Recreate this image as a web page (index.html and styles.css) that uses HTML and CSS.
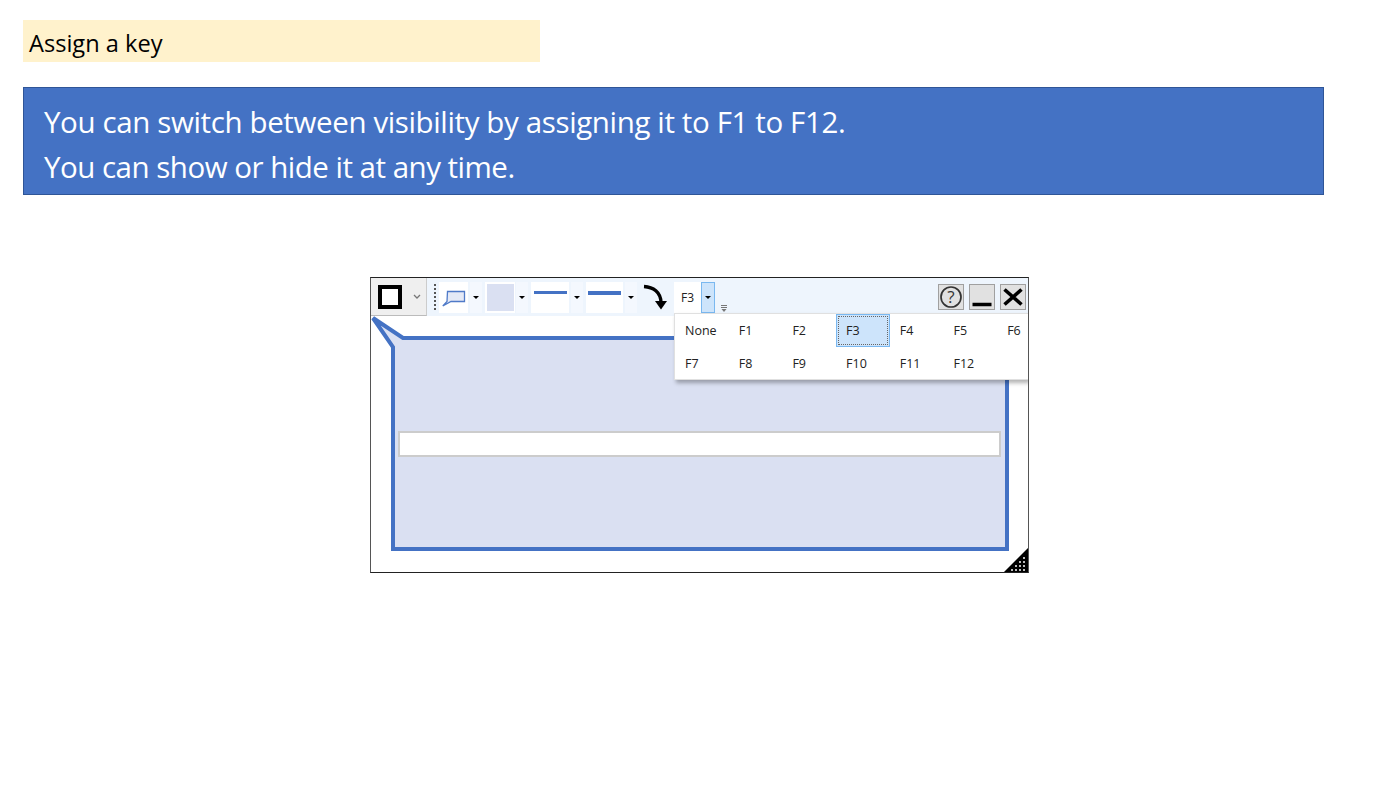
FILE: index.html
```html
<!DOCTYPE html>
<html lang="en">
<head>
  <meta charset="UTF-8" />
  <title>Assign a key</title>
  <link rel="stylesheet" href="styles.css">
</head>
<body>
  <div class="title">Assign a key</div>

  <div class="banner">
    <p>You can switch between visibility by assigning it to F1 to F12.</p>
    <p>You can show or hide it at any time.</p>
  </div>

  <div class="window">
    <div class="toolbar">
      <div class="shape-btn">
        <span class="shape-square"></span>
        <svg class="chevron" width="8" height="6" viewBox="0 0 8 6"><path d="M1 1l3 3 3-3" fill="none" stroke="#777" stroke-width="1.3"/></svg>
      </div>
      <div class="gripper"></div>

      <div class="tool tool-balloon">
        <svg width="24" height="20" viewBox="0 0 24 20"><path d="M5.5 4.5h17v10H9L.8 19 5 14.5z" fill="#e4e9f6" stroke="#4f7ac8" stroke-width="1.3"/></svg>
      </div>
      <div class="drop"><i class="caret"></i></div>

      <div class="tool tool-fill"><span class="swatch"></span></div>
      <div class="drop drop-fill"><i class="caret"></i></div>

      <div class="tool tool-line"><span class="line-thin"></span></div>
      <div class="drop"><i class="caret"></i></div>

      <div class="tool tool-line tool-line2"><span class="line-thick"></span></div>
      <div class="drop"><i class="caret"></i></div>

      <svg class="turn-arrow" width="26" height="30" viewBox="0 0 26 30"><path d="M1 4.5C10 5 18 10 18 21" fill="none" stroke="#000" stroke-width="3.4"/><path d="M12 19h12l-6 8.5z" fill="#000"/></svg>

      <div class="key-box">F3</div>
      <div class="key-drop"><i class="caret"></i></div>
      <svg class="overflow" width="8" height="8" viewBox="0 0 8 8"><path d="M1 1.5h6M1 3.5h6" stroke="#777" stroke-width="1"/><path d="M1.5 5h5L4 8z" fill="#777"/></svg>

      <div class="win-btns">
        <div class="win-btn">
          <svg width="24" height="24" viewBox="0 0 24 24"><circle cx="12" cy="12" r="10" fill="none" stroke="#333" stroke-width="1.7"/><text x="12" y="18" class="help-mark">?</text></svg>
        </div>
        <div class="win-btn">
          <svg width="24" height="24" viewBox="0 0 24 24"><path d="M2.5 19.5h19" stroke="#000" stroke-width="3.5"/></svg>
        </div>
        <div class="win-btn">
          <svg width="24" height="24" viewBox="0 0 24 24"><path d="M3.5 4.5L20.5 19.5M20.5 4.5L3.5 19.5" stroke="#000" stroke-width="3.6"/></svg>
        </div>
      </div>
    </div>

    <div class="canvas">
      <svg class="balloon" width="657" height="255" viewBox="0 0 657 255">
        <path d="M2 2L32 22H636V233H22V31Z" fill="#dae0f2" stroke="#4472c4" stroke-width="4"/>
      </svg>
      <div class="text-line"></div>
      <svg class="resize" width="24" height="24" viewBox="0 0 24 24">
        <path d="M24 0V24H0Z" fill="#000"/>
        <path d="M19 9h2v2h-2zM15 13h2v2h-2zM19 13h2v2h-2zM11 17h2v2h-2zM15 17h2v2h-2zM19 17h2v2h-2zM7 21h2v2H7zM11 21h2v2h-2zM15 21h2v2h-2zM19 21h2v2h-2z" fill="#bbb"/>
      </svg>
    </div>

    <div class="key-menu">
      <div class="key-item">None</div>
      <div class="key-item">F1</div>
      <div class="key-item">F2</div>
      <div class="key-item selected">F3</div>
      <div class="key-item">F4</div>
      <div class="key-item">F5</div>
      <div class="key-item">F6</div>
      <div class="key-item">F7</div>
      <div class="key-item">F8</div>
      <div class="key-item">F9</div>
      <div class="key-item">F10</div>
      <div class="key-item">F11</div>
      <div class="key-item">F12</div>
    </div>
  </div>
</body>
</html>
```

FILE: styles.css
```css
body {
    margin: 0;
    padding: 20px 0 0 23px;
    background: #fff;
    font-family: 'Open Sans', 'Noto Sans', sans-serif;
    color: #000;
    overflow: hidden;
    height: 767px;
}

.title {
    width: 511px;
    height: 42px;
    padding-left: 6px;
    background: #fff2cc;
    font-size: 23.6px;
    line-height: 46px;
}

.banner {
    width: 1279px;
    height: 106px;
    margin-top: 25px;
    padding-left: 20px;
    background: #4472c4;
    border: 1px solid #2f5597;
    color: #fff;
    font-size: 29.5px;
    line-height: 45px;
    letter-spacing: -0.37px;
}

.banner p {
    margin: 0;
    position: relative;
    top: 11px;
}

.banner p + p {
    letter-spacing: -0.5px;
}

/* App window */
.window {
    position: relative;
    width: 657px;
    height: 294px;
    margin: 82px 0 0 347px;
    border: 1px solid #222;
    border-right-color: #555;
    border-left-color: #555;
}

.toolbar {
    display: flex;
    align-items: center;
    height: 38px;
    background: #eef5fd;
}

.shape-btn {
    display: flex;
    align-items: center;
    flex: none;
    width: 56px;
    height: 38px;
    box-sizing: border-box;
    padding-left: 7px;
    background: #efefef;
    border-right: 1px solid #ccc;
    border-bottom: 1px solid #bbb;
}

.shape-square {
    width: 24px;
    height: 24px;
    box-sizing: border-box;
    border: 4px solid #000;
    background: #fff;
}

.chevron {
    margin-left: 11px;
}

.gripper {
    width: 0;
    height: 26px;
    margin: 0 3px 0 7px;
    border-left: 2px dotted #555;
}

.tool {
    display: flex;
    justify-content: center;
    align-items: center;
    flex: none;
    height: 31px;
    background: #fff;
}

.tool-balloon {
    width: 29px;
}

.tool-fill {
    width: 30px;
}

.swatch {
    width: 27px;
    height: 27px;
    background: #dae0f2;
}

.tool-line {
    width: 38px;
    box-sizing: border-box;
    align-items: flex-start;
    padding-top: 9px;
}

.tool-line2 {
    width: 37px;
}

.line-thin {
    width: 33px;
    height: 3px;
    background: #4472c4;
}

.line-thick {
    width: 33px;
    height: 4.5px;
    background: #4472c4;
}

.drop {
    display: flex;
    justify-content: center;
    align-items: center;
    flex: none;
    width: 12px;
    height: 31px;
    margin: 0 3px 0 2px;
    background: #f4f8fe;
}

.drop-fill {
    margin-left: 1px;
}

.caret {
    width: 0;
    height: 0;
    border-left: 3px solid transparent;
    border-right: 3px solid transparent;
    border-top: 3px solid #000;
}

.turn-arrow {
    flex: none;
    margin-left: 3px;
}

.key-box {
    flex: none;
    width: 27px;
    height: 31px;
    margin-left: 5px;
    background: #fff;
    font-size: 12px;
    line-height: 32px;
    text-align: center;
    color: #222;
}

.key-drop {
    display: flex;
    justify-content: center;
    align-items: center;
    flex: none;
    width: 14px;
    height: 31px;
    box-sizing: border-box;
    background: #cde4fb;
    border: 1px solid #7ab8f0;
}

.overflow {
    align-self: flex-end;
    margin: 0 0 4px 5px;
}

.win-btns {
    display: flex;
    gap: 5px;
    margin-left: auto;
    margin-right: 2px;
}

.win-btn {
    width: 26px;
    height: 26px;
    box-sizing: border-box;
    background: #e1e1e1;
    border: 1px solid #a0a0a0;
}

.win-btn svg {
    display: block;
}

.help-mark {
    font-family: 'Open Sans', sans-serif;
    font-size: 17px;
    fill: #333;
    text-anchor: middle;
}

/* Balloon on the canvas */
.canvas {
    position: relative;
    height: 256px;
}

.balloon {
    position: absolute;
    top: 0;
    left: 0;
}

.text-line {
    position: absolute;
    top: 115px;
    left: 27px;
    width: 603px;
    height: 26px;
    box-sizing: border-box;
    background: #fff;
    border: 2px solid #ccc;
}

.resize {
    position: absolute;
    right: 0;
    bottom: 0;
}

/* F-key dropdown */
.key-menu {
    position: absolute;
    top: 35px;
    left: 303px;
    width: 354px;
    height: 67px;
    box-sizing: border-box;
    display: grid;
    grid-template-columns: repeat(7, 53.7px);
    grid-auto-rows: 33px;
    background: #fff;
    border: 1px solid #e0e0e0;
    border-right: 0;
    box-shadow: 2px 3px 4px rgba(0, 0, 0, 0.3);
    clip-path: inset(-2px 0 -8px -2px);
    font-size: 12.5px;
    color: #222;
}

.key-item {
    padding-left: 10px;
    line-height: 33px;
}

.selected {
    background: #cde4fb;
    outline: 1px solid #7ab8f0;
    outline-offset: -1px;
    position: relative;
}

.selected::after {
    content: '';
    position: absolute;
    inset: 2px;
    border: 1px dotted #666;
}
```
